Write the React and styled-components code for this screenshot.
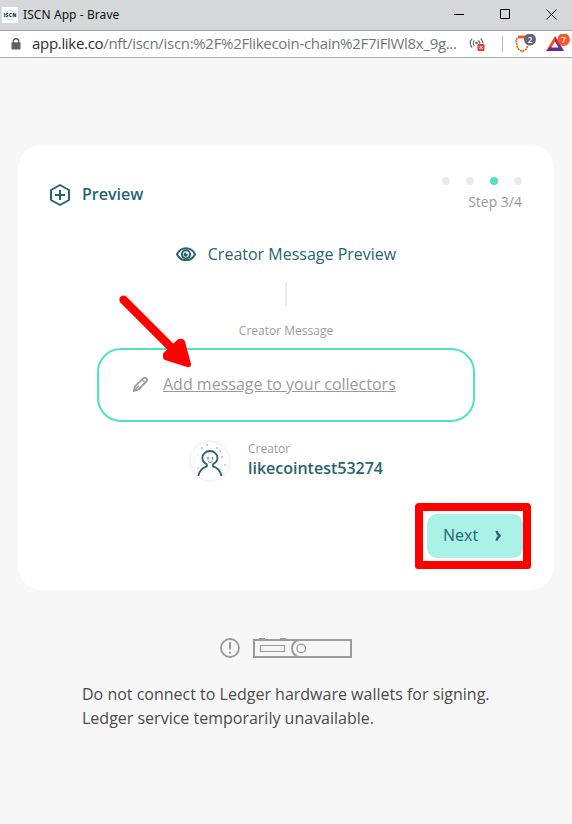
import React from 'react';
import styled, { createGlobalStyle } from 'styled-components';

const GlobalStyle = createGlobalStyle`
  * { box-sizing: border-box; }
  body { margin: 0; background: #f7f7f7; font-family: "Open Sans", sans-serif; }
  svg { display: block; flex: none; }
`;

const Window = styled.div`
  position: relative;
  width: 572px;
  height: 824px;
  overflow: hidden;
  background: #f7f7f7;
`;

const TitleBar = styled.header`
  display: flex;
  align-items: center;
  height: 30px;
  padding: 0 15px 1px 2px;
  background: #d5d8db;
  color: #111;
`;

const WindowTitle = styled.span`
  flex: 1;
  margin-left: 5px;
  font: 12px/18px "Noto Sans", sans-serif;
  letter-spacing: 0.08px;
`;

const WindowControls = styled.div`
  display: flex;
  align-items: center;
  gap: 35px;
`;

const AddressBar = styled.div`
  display: flex;
  align-items: center;
  height: 28px;
  padding: 0 1px 0 11px;
  background: #fff;
  border-top: 1px solid #a3a4a5;
  border-bottom: 1px solid #a8a8a8;
`;

const Url = styled.div`
  width: 426px;
  margin: -2px 11px 0 11px;
  font-size: 15px;
  line-height: 20px;
  letter-spacing: ${(p) => p.$tracking};
  white-space: nowrap;
  color: #737679;
`;

const Host = styled.span`
  color: #2b2e32;
`;

const BarSeparator = styled.div`
  width: 1px;
  height: 16px;
  margin: 0 12px 0 16px;
  background: #b5b5b5;
`;

const Extensions = styled.div`
  display: flex;
  gap: 9px;
`;

const Card = styled.main`
  display: flex;
  flex-direction: column;
  align-items: center;
  width: 536px;
  height: 445px;
  margin: 87px 0 0 18px;
  padding: 32px;
  background: #fff;
  border-radius: 24px;
`;

const CardHeader = styled.div`
  display: flex;
  justify-content: space-between;
  width: 100%;
  height: 35px;
`;

const Heading = styled.h1`
  display: flex;
  align-items: center;
  gap: 12px;
  height: 35px;
  margin: 0;
  color: #28646e;
  font-size: 16px;
  font-weight: 600;
`;

const HeadingText = styled.span`
  padding-bottom: 2px;
`;

const Stepper = styled.div`
  display: flex;
  flex-direction: column;
  align-items: flex-end;
  gap: 7px;
`;

const Dots = styled.div`
  display: flex;
  gap: 16px;
`;

const Dot = styled.i`
  width: 8px;
  height: 8px;
  border-radius: 50%;
  background: ${(p) => (p.$active ? '#50e3c2' : '#ebebeb')};
`;

const StepText = styled.span`
  font-size: 14px;
  line-height: 20px;
  color: #9b9b9b;
`;

const SectionTitle = styled.h2`
  display: flex;
  align-items: center;
  gap: 12px;
  height: 24px;
  margin: 30px 0 16px;
  color: #28646e;
  font-size: 16px;
  font-weight: 400;
`;

const Divider = styled.div`
  width: 2px;
  height: 24px;
  background: #ebebeb;
`;

const Caption = styled.span`
  font-size: 12px;
  line-height: 16px;
  color: #9b9b9b;
`;

const MessageCaption = styled(Caption)`
  margin: 17px 0 9px;
`;

const MessageBox = styled.div`
  display: flex;
  align-items: center;
  gap: 14px;
  width: 378px;
  height: 74px;
  padding: 0 33px 2px;
  border: 2px solid #50e3c2;
  border-radius: 24px;
`;

const MessageLink = styled.a`
  color: #9b9b9b;
  font-size: 16px;
  line-height: 24px;
  text-decoration: underline;
`;

const CreatorRow = styled.div`
  display: flex;
  gap: 17px;
  margin-top: 18px;
`;

const CreatorInfo = styled.div`
  display: flex;
  flex-direction: column;
  margin-top: 1px;
`;

const CreatorName = styled.strong`
  color: #28646e;
  font-size: 16px;
  line-height: 22px;
  font-weight: 600;
`;

const NextButton = styled.button`
  display: flex;
  align-items: center;
  align-self: flex-end;
  justify-content: space-between;
  width: 96px;
  height: 44px;
  margin: 32px -1px 0 0;
  padding: 0 21px 2px 16px;
  border: 0;
  border-radius: 10px;
  background: #aaf1e7;
  color: #28646e;
  font: 16px/24px "Open Sans", sans-serif;
`;

const LedgerNotice = styled.footer`
  width: 408px;
  margin: 47px 0 0 82px;
`;

const LedgerIcons = styled.div`
  display: flex;
  align-items: center;
  justify-content: center;
  gap: 12px;
  height: 22px;
`;

const NoticeText = styled.p`
  margin: 23px 0 0;
  color: #4a4a4a;
  font-size: 16px;
  line-height: 24px;
  white-space: nowrap;
`;

const ArrowMark = styled.svg`
  position: absolute;
  left: 115px;
  top: 290px;
`;

const BoxMark = styled.div`
  position: absolute;
  left: 415px;
  top: 503px;
  width: 116px;
  height: 66px;
  border: 8px solid #f00;
  border-radius: 4px 4px 3px 3px;
`;

const Favicon = () => (
  <svg width="16" height="16" viewBox="0 0 16 16">
    <path fill="#fff" d="M0 0h16v16H0z" />
    <circle cx="8" cy="8" r="4.6" fill="none" stroke="#a2eadf" />
    <text x="1.5" y="9.8" fontFamily="Open Sans" fontSize="5" fontWeight="800" textLength="13" fill="#173f43">ISCN</text>
  </svg>
);

const Lock = () => (
  <svg width="10" height="12" viewBox="0 0 10 12">
    <path d="M2.3 5V3.4a2.7 2.7 0 0 1 5.4 0V5" fill="none" stroke="#5f6368" strokeWidth="1.4" />
    <rect x=".5" y="4.3" width="9" height="7.2" rx="1" fill="#5f6368" />
  </svg>
);

const Broadcast = () => (
  <svg width="17" height="16" viewBox="0 0 17 16">
    <g fill="none" stroke="#6b6e72" strokeWidth="1.3">
      <path d="M3.2 2.6a6.2 6.2 0 0 0 0 9M5.4 4.5a3.7 3.7 0 0 0 0 5.2M11.6 2.6a6.2 6.2 0 0 1 2.4 5M9.4 4.5a3.7 3.7 0 0 1 1.4 3.2" />
    </g>
    <circle cx="7.6" cy="7" r="1.3" fill="#6b6e72" />
    <rect x="8.5" y="8" width="7" height="7" rx="1" fill="#dd4038" />
    <path d="m10.5 10 3 3m0-3-3 3" stroke="#fff" />
  </svg>
);

const Shields = () => (
  <svg width="22" height="20" viewBox="0 0 22 20">
    <path d="M3 3h8" stroke="#fb4b25" strokeWidth="2.8" />
    <path d="M2.5 4 .9 6l1.2 6.5L3.8 15.5 7.5 17.5l4-2.5 1.5-4" fill="none" stroke="#ed6a1c" strokeWidth="1.7" strokeDasharray="2.2 .6" />
    <circle cx="15" cy="5.5" r="6" fill="#626775" />
    <text x="15" y="8.5" textAnchor="middle" fontFamily="Open Sans" fontSize="8" fontWeight="600" fill="#fff">2</text>
  </svg>
);

const Rewards = () => (
  <svg width="24" height="20" viewBox="0 0 24 20">
    <path d="M9 2 0 17h4.5L9 9z" fill="#ff4724" />
    <path d="m9 2 9 15h-4.5L9 9z" fill="#9e1f63" />
    <path d="M0 17h18l-3-4H4z" fill="#662d91" />
    <path d="m9 7.5 3.5 6h-7z" fill="#fff" />
    <circle cx="17.6" cy="5.6" r="6.3" fill="#fb542b" />
    <text x="17.6" y="8.6" textAnchor="middle" fontFamily="Open Sans" fontSize="8" fontWeight="600" fill="#fff">7</text>
  </svg>
);

const HexPlus = () => (
  <svg width="20" height="22" viewBox="0 0 20 22" fill="none" stroke="#28646e" strokeWidth="2" strokeLinejoin="round">
    <path d="m10 1 9 5v10l-9 5-9-5V6z" />
    <path d="M10 6v10M5 11h10" />
  </svg>
);

const Eye = () => (
  <svg width="20" height="14" viewBox="0 0 20 14" fill="none" stroke="#28646e">
    <path d="M1 7.3c2-4 5.3-6 9-6s7 2 9 6c-2 4-5.3 6-9 6s-7-2-9-6z" strokeWidth="2" />
    <circle cx="10" cy="7.3" r="4.1" strokeWidth="2" />
    <circle cx="9.7" cy="7.6" r="2.2" fill="#28646e" stroke="none" />
    <circle cx="11" cy="6.1" r="1.2" fill="#fff" stroke="none" />
  </svg>
);

const Pencil = () => (
  <svg width="17" height="16" viewBox="0 0 17 16" fill="none" stroke="#9b9b9b" strokeWidth="1.8" strokeLinejoin="round">
    <path d="M1.8 15 3 10.4 10.8 2.7c2.6-2.5 5.6.4 3.4 3.2L6.6 13.3z" />
    <path d="m1.8 15 5.2-5.2M10 3.6l3.2 3.2" strokeWidth="1.3" />
  </svg>
);

const specks = [[13, 8], [28, 8], [9, 15], [18, 5], [33, 17], [6, 22], [36, 25], [9, 28], [31, 29], [31, 11]];

const Avatar = () => (
  <svg width="42" height="42" viewBox="0 0 42 42" fill="none">
    <circle cx="21" cy="21" r="20" stroke="#f5f5f5" strokeWidth="2" />
    {specks.map(([x, y], i) => (
      <circle key={i} cx={x} cy={y} r=".8" fill={i % 3 === 2 ? '#b9eee5' : '#8d989e'} />
    ))}
    <path d="M9.3 36c1.2-5.8 4.3-8.4 8.5-9.6v-2.2c-3-1.5-4.5-3.7-4.5-6.2a7.6 7 0 0 1 15.2 0c0 2.5-1.7 4.7-4.6 6.2v2.2c4.2 1.2 7.4 3.8 8.6 9.6" stroke="#28646e" strokeWidth="1.8" strokeLinejoin="round" />
    <path d="M19 17v2.6M23.6 17v2.6M19.3 21.6q2 2 4 0" stroke="#426f77" />
  </svg>
);

const Chevron = () => (
  <svg width="7" height="12" viewBox="0 0 7 12" fill="none" stroke="#28646e" strokeWidth="2.4">
    <path d="M1.5 2q.4 2 3 4.9Q1.9 9.5 1.5 11.6" />
  </svg>
);

const Alert = () => (
  <svg width="20" height="20" viewBox="0 0 20 20" fill="none" stroke="#9b9b9b" strokeWidth="1.8">
    <circle cx="10" cy="10" r="9" />
    <path d="M10 4.2v7.3M10 13.7v2" strokeWidth="2" />
  </svg>
);

const Ledger = () => (
  <svg width="100" height="20" viewBox="0 0 100 20" fill="none" stroke="#9b9b9b">
    <path d="M7 .8h6M28 .8h6" strokeWidth="1.6" />
    <path d="M2 2h97v17H2z" strokeWidth="2" />
    <path d="M8.5 7.5h24v6h-24z" strokeWidth="1.2" />
    <path d="M48 2c-4.5 0-8 3.8-8 8.5s3.5 8.5 8 8.5" strokeWidth="2" />
    <circle cx="49.2" cy="10.4" r="4.3" strokeWidth="1.3" />
  </svg>
);

export default function App() {
  return (
    <Window>
      <GlobalStyle />
      <TitleBar>
        <Favicon />
        <WindowTitle>ISCN App - Brave</WindowTitle>
        <WindowControls>
          <svg width="11" height="11" stroke="#000"><path d="M0 5.5h10" /></svg>
          <svg width="11" height="11" stroke="#000" fill="none"><path d="M.5.5h9v9h-9z" /></svg>
          <svg width="11" height="11" stroke="#000"><path d="m.5.5 10 10m0-10-10 10" /></svg>
        </WindowControls>
      </TitleBar>
      <AddressBar>
        <Lock />
        <Url $tracking="-0.31px"><Host>app.like.co</Host>/nft/iscn/iscn:%2F%2Flikecoin-chain%2F7iFlWl8x_9g...</Url>
        <Broadcast />
        <BarSeparator />
        <Extensions>
          <Shields />
          <Rewards />
        </Extensions>
      </AddressBar>

      <Card>
        <CardHeader>
          <Heading><HexPlus /><HeadingText>Preview</HeadingText></Heading>
          <Stepper>
            <Dots>
              {[1, 2, 3, 4].map((n) => <Dot key={n} $active={n === 3} />)}
            </Dots>
            <StepText>Step 3/4</StepText>
          </Stepper>
        </CardHeader>
        <SectionTitle><Eye />Creator Message Preview</SectionTitle>
        <Divider />
        <MessageCaption>Creator Message</MessageCaption>
        <MessageBox>
          <Pencil />
          <MessageLink>Add message to your collectors</MessageLink>
        </MessageBox>
        <CreatorRow>
          <Avatar />
          <CreatorInfo>
            <Caption>Creator</Caption>
            <CreatorName>likecointest53274</CreatorName>
          </CreatorInfo>
        </CreatorRow>
        <NextButton>Next<Chevron /></NextButton>
      </Card>

      <LedgerNotice>
        <LedgerIcons><Alert /><Ledger /></LedgerIcons>
        <NoticeText>
          Do not connect to Ledger hardware wallets for signing.<br />
          Ledger service temporarily unavailable.
        </NoticeText>
      </LedgerNotice>

      <ArrowMark width="80" height="80" viewBox="0 0 80 80" fill="#f00" stroke="#f00" strokeLinecap="round" strokeLinejoin="round">
        <path d="m8.5 9.8 50 50" strokeWidth="8.4" />
        <path d="m73 74.2-22-7v-2.5L64.5 52H67z" strokeWidth="6" />
      </ArrowMark>
      <BoxMark />
    </Window>
  );
}
